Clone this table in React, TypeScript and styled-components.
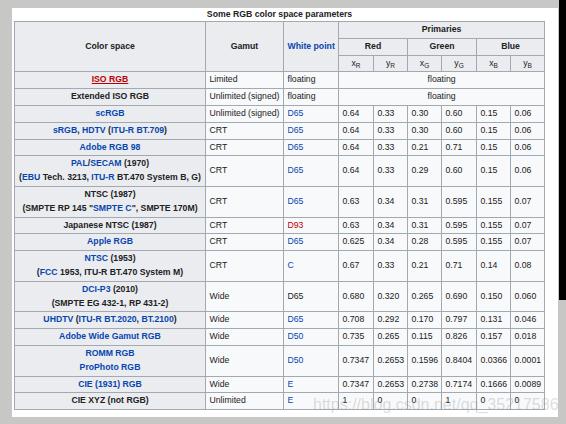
import React from "react";
import styled, { createGlobalStyle } from "styled-components";

const Global = createGlobalStyle`
  html, body { margin: 0; padding: 0; }
  body {
    background: #c7c7c5;
    font-family: "Liberation Sans", Arial, sans-serif;
    overflow: hidden;
  }
`;

const Page = styled.div`
  display: flex;
  align-items: flex-start;
  height: 424px;
  padding-left: 12px;
  box-sizing: border-box;
`;

const Panel = styled.div`
  position: relative;
  margin-top: 8px;
  width: 546px;
  height: 409px;
  background: #ffffff;
  padding: 0 0 0 2px;
  box-sizing: border-box;
`;

const SideBar = styled.div`
  margin-left: 1px;
  width: 7px;
  height: 300px;
  background: #000000;
`;

const Table = styled.table`
  border-collapse: collapse;
  table-layout: fixed;
  width: 531px;
  font-size: 8.7px;
  line-height: 13.8px;
  color: #202122;
  background: #f8f9fa;
`;

const Caption = styled.caption`
  font-weight: bold;
  line-height: 13px;
  text-align: center;
  padding: 0;
  color: #202122;
`;

const HeadCell = styled.th<{ $center?: boolean }>`
  background: #eaecf0;
  border: 1px solid #a2a9b1;
  padding: 1px 3.5px;
  font-weight: bold;
  text-align: center;
  white-space: nowrap;
`;

const SubHead = styled.th`
  background: #eaecf0;
  border: 1px solid #a2a9b1;
  padding: 1px 3.5px;
  font-weight: normal;
  text-align: center;
  white-space: nowrap;
  sub {
    font-size: 6.5px;
    line-height: 0;
    vertical-align: -1.5px;
  }
`;

const RowHead = styled.th`
  background: #eaecf0;
  border: 1px solid #a2a9b1;
  padding: 1px 3.5px;
  font-weight: bold;
  text-align: center;
  white-space: nowrap;
`;

const Cell = styled.td<{ $center?: boolean }>`
  border: 1px solid #a2a9b1;
  padding: 1px 3.5px;
  text-align: ${(p) => (p.$center ? "center" : "left")};
  white-space: nowrap;
  vertical-align: middle;
`;

const L = styled.span<{ $tone?: "blue" | "red" | "redline" }>`
  color: ${(p) => (p.$tone === "red" || p.$tone === "redline" ? "#ba0000" : "#0645ad")};
  text-decoration: ${(p) => (p.$tone === "redline" ? "underline" : "none")};
`;

const Watermark = styled.div`
  position: absolute;
  left: 301px;
  top: 388px;
  font-family: "Liberation Sans", Arial, sans-serif;
  font-size: 16px;
  line-height: 18px;
  color: rgba(150, 150, 150, 0.33);
  white-space: nowrap;
  pointer-events: none;
`;

type WP = { text: string; tone?: "blue" | "red" | "plain" };
type Row = {
  name: React.ReactNode;
  gamut: string;
  wp: WP;
  vals?: string[];
};

const rows: Row[] = [
  {
    name: <L $tone="redline">ISO RGB</L>,
    gamut: "Limited",
    wp: { text: "floating", tone: "plain" },
  },
  {
    name: "Extended ISO RGB",
    gamut: "Unlimited (signed)",
    wp: { text: "floating", tone: "plain" },
  },
  {
    name: <L>scRGB</L>,
    gamut: "Unlimited (signed)",
    wp: { text: "D65" },
    vals: ["0.64", "0.33", "0.30", "0.60", "0.15", "0.06"],
  },
  {
    name: (
      <>
        <L>sRGB</L>, <L>HDTV</L> (<L>ITU-R BT.709</L>)
      </>
    ),
    gamut: "CRT",
    wp: { text: "D65" },
    vals: ["0.64", "0.33", "0.30", "0.60", "0.15", "0.06"],
  },
  {
    name: <L>Adobe RGB 98</L>,
    gamut: "CRT",
    wp: { text: "D65" },
    vals: ["0.64", "0.33", "0.21", "0.71", "0.15", "0.06"],
  },
  {
    name: (
      <>
        <L>PAL</L>/<L>SECAM</L> (1970)
        <br />(<L>EBU</L> Tech. 3213, <L>ITU-R</L> BT.470 System B, G)
      </>
    ),
    gamut: "CRT",
    wp: { text: "D65" },
    vals: ["0.64", "0.33", "0.29", "0.60", "0.15", "0.06"],
  },
  {
    name: (
      <>
        NTSC (1987)
        <br />
        (SMPTE RP 145 "<L>SMPTE C</L>", SMPTE 170M)
      </>
    ),
    gamut: "CRT",
    wp: { text: "D65" },
    vals: ["0.63", "0.34", "0.31", "0.595", "0.155", "0.07"],
  },
  {
    name: "Japanese NTSC (1987)",
    gamut: "CRT",
    wp: { text: "D93", tone: "red" },
    vals: ["0.63", "0.34", "0.31", "0.595", "0.155", "0.07"],
  },
  {
    name: <L>Apple RGB</L>,
    gamut: "CRT",
    wp: { text: "D65" },
    vals: ["0.625", "0.34", "0.28", "0.595", "0.155", "0.07"],
  },
  {
    name: (
      <>
        <L>NTSC</L> (1953)
        <br />(<L>FCC</L> 1953, ITU-R BT.470 System M)
      </>
    ),
    gamut: "CRT",
    wp: { text: "C" },
    vals: ["0.67", "0.33", "0.21", "0.71", "0.14", "0.08"],
  },
  {
    name: (
      <>
        <L>DCI-P3</L> (2010)
        <br />
        (SMPTE EG 432-1, RP 431-2)
      </>
    ),
    gamut: "Wide",
    wp: { text: "D65", tone: "plain" },
    vals: ["0.680", "0.320", "0.265", "0.690", "0.150", "0.060"],
  },
  {
    name: (
      <>
        <L>UHDTV</L> (<L>ITU-R BT.2020</L>, <L>BT.2100</L>)
      </>
    ),
    gamut: "Wide",
    wp: { text: "D65" },
    vals: ["0.708", "0.292", "0.170", "0.797", "0.131", "0.046"],
  },
  {
    name: <L>Adobe Wide Gamut RGB</L>,
    gamut: "Wide",
    wp: { text: "D50" },
    vals: ["0.735", "0.265", "0.115", "0.826", "0.157", "0.018"],
  },
  {
    name: (
      <>
        <L>ROMM RGB</L>
        <br />
        <L>ProPhoto RGB</L>
      </>
    ),
    gamut: "Wide",
    wp: { text: "D50" },
    vals: ["0.7347", "0.2653", "0.1596", "0.8404", "0.0366", "0.0001"],
  },
  {
    name: <L>CIE (1931) RGB</L>,
    gamut: "Wide",
    wp: { text: "E" },
    vals: ["0.7347", "0.2653", "0.2738", "0.7174", "0.1666", "0.0089"],
  },
  {
    name: "CIE XYZ (not RGB)",
    gamut: "Unlimited",
    wp: { text: "E" },
    vals: ["1", "0", "0", "1", "0", "0"],
  },
];

const colWidths = [191, 78, 55, 35, 34, 34, 35, 34, 34];

function WhitePoint({ wp }: { wp: WP }) {
  if (wp.tone === "plain") return <>{wp.text}</>;
  return <L $tone={wp.tone === "red" ? "red" : "blue"}>{wp.text}</L>;
}

export default function App() {
  return (
    <>
      <Global />
      <Page>
        <Panel>
          <Table>
            <Caption>Some RGB color space parameters</Caption>
            <colgroup>
              {colWidths.map((w, i) => (
                <col key={i} style={{ width: w }} />
              ))}
            </colgroup>
            <thead>
              <tr>
                <HeadCell rowSpan={3}>Color space</HeadCell>
                <HeadCell rowSpan={3}>Gamut</HeadCell>
                <HeadCell rowSpan={3}>
                  <L>White point</L>
                </HeadCell>
                <HeadCell colSpan={6}>Primaries</HeadCell>
              </tr>
              <tr>
                <HeadCell colSpan={2}>Red</HeadCell>
                <HeadCell colSpan={2}>Green</HeadCell>
                <HeadCell colSpan={2}>Blue</HeadCell>
              </tr>
              <tr>
                {["R", "G", "B"].map((c) => (
                  <React.Fragment key={c}>
                    <SubHead>
                      x<sub>{c}</sub>
                    </SubHead>
                    <SubHead>
                      y<sub>{c}</sub>
                    </SubHead>
                  </React.Fragment>
                ))}
              </tr>
            </thead>
            <tbody>
              {rows.map((r, i) => (
                <tr key={i}>
                  <RowHead>{r.name}</RowHead>
                  <Cell>{r.gamut}</Cell>
                  <Cell>
                    <WhitePoint wp={r.wp} />
                  </Cell>
                  {r.vals ? (
                    r.vals.map((v, j) => <Cell key={j}>{v}</Cell>)
                  ) : (
                    <Cell colSpan={6} $center>
                      floating
                    </Cell>
                  )}
                </tr>
              ))}
            </tbody>
          </Table>
          <Watermark>https://blog.csdn.net/qq_35217586</Watermark>
        </Panel>
        <SideBar />
      </Page>
    </>
  );
}
